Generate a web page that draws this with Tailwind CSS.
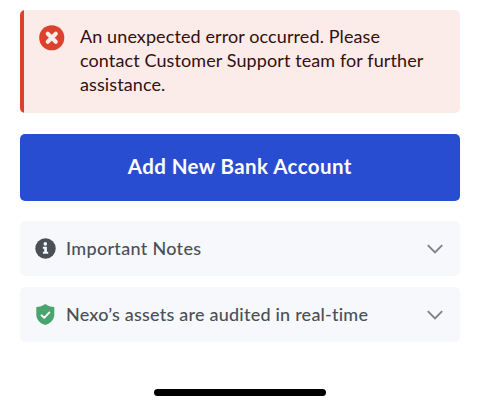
<!DOCTYPE html>
<html lang="en">
<head>
<meta charset="UTF-8">
<meta name="viewport" content="width=device-width, initial-scale=1.0">
<title>Add Bank Account</title>
<script src="https://cdn.jsdelivr.net/npm/@tailwindcss/browser@4"></script>
</head>
<body class="bg-white font-[Lato,sans-serif]">

<div class="flex h-[406px] w-[480px] flex-col overflow-hidden pt-[9.5px] pr-[20.5px] pl-5">
  <!-- Error alert -->
  <div class="flex h-[103.5px] shrink-0 overflow-hidden rounded-[5px] bg-[#fbebe9] text-[#35100e]">
    <div class="w-1 shrink-0 bg-[#de402e]"></div>
    <svg class="mt-[15.5px] ml-[15px] size-[25.5px] shrink-0" viewBox="0 0 26 26" fill="none">
      <circle cx="13" cy="13" r="12.8" fill="#de402e"/>
      <path d="M8.9 8.9l8.2 8.2M17.1 8.9l-8.2 8.2" stroke="#fbebe9" stroke-width="4.2" stroke-linecap="round"/>
    </svg>
    <p class="mt-3.5 ml-[15.5px] text-lg leading-6 tracking-[0.1px] whitespace-nowrap">
      An unexpected error occurred. Please<br>
      contact Customer Support team for further<br>
      assistance.
    </p>
  </div>

  <button class="mt-[21px] flex h-[66.5px] shrink-0 items-center justify-center rounded-[5px] bg-[#294dd0] pb-0.5 text-[20.5px] font-bold tracking-[0.41px] whitespace-nowrap text-white">
    Add New Bank Account
  </button>

  <!-- Collapsed sections -->
  <div class="mt-[20.5px] flex flex-col gap-[11px] text-lg font-medium text-[#4b5055]">
    <div class="flex h-[55px] items-center rounded-[5px] bg-[#f6f8fc] pr-[17px] pl-[15px]">
      <svg class="size-[21px] shrink-0" viewBox="0 0 21 21">
        <circle cx="10.5" cy="10.5" r="10.2" fill="#4a5056"/>
        <circle cx="10.3" cy="5.9" r="1.8" fill="#f6f8fc"/>
        <path d="M7.9 8.8h4v5h1.3v2H7.9v-2h1.3v-3H7.9z" fill="#f6f8fc"/>
      </svg>
      <span class="ml-2.5 pb-0.5 tracking-[0.31px] whitespace-nowrap">Important Notes</span>
      <svg class="mt-px ml-auto h-2.5 w-4 shrink-0" viewBox="0 0 16 10" fill="none">
        <path d="M.8 1.2L8 8.4l7.2-7.2" stroke="#7d8187" stroke-width="1.9"/>
      </svg>
    </div>
    <div class="flex h-[55px] items-center rounded-[5px] bg-[#f6f8fc] pr-[17px] pl-[15px]">
      <svg class="size-[21px] shrink-0" viewBox="0 0 21 21" fill="none">
        <path d="M10.3 0C13 2 16 3 19.3 3.1v7.1c0 5.3-3.5 9.1-9 10.8-5.5-1.7-9-5.5-9-10.8V3.1C4.6 3 7.6 2 10.3 0z" fill="#49a56d"/>
        <path d="M6.5 11.3l2.7 2.6 5.2-5.5" stroke="#f6f8fc" stroke-width="1.9" stroke-linecap="round" stroke-linejoin="round"/>
      </svg>
      <span class="ml-2.5 pb-0.5 tracking-[0.22px] whitespace-nowrap">Nexo’s assets are audited in real-time</span>
      <svg class="mt-px ml-auto h-2.5 w-4 shrink-0" viewBox="0 0 16 10" fill="none">
        <path d="M.8 1.2L8 8.4l7.2-7.2" stroke="#7d8187" stroke-width="1.9"/>
      </svg>
    </div>
  </div>

  <!-- Home indicator -->
  <div class="mt-[47px] ml-[134px] h-[7px] w-[172px] shrink-0 rounded-full bg-black"></div>
</div>

</body>
</html>
